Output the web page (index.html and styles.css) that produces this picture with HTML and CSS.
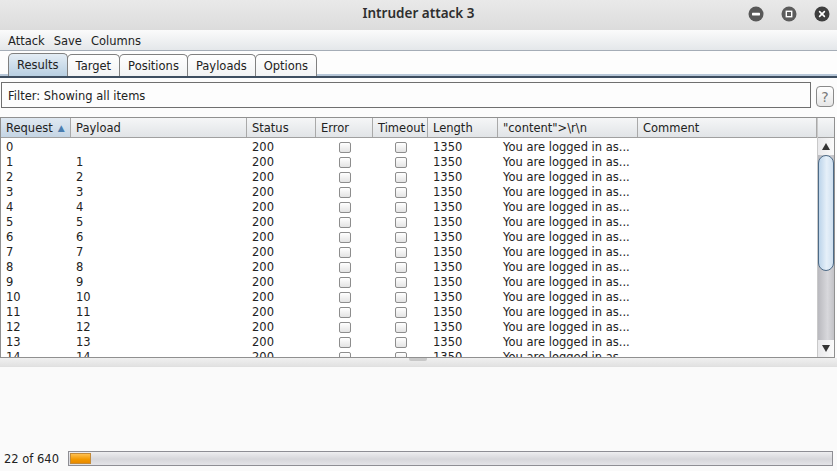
FILE: index.html
```html
<!DOCTYPE html>
<html>
<head>
<meta charset="utf-8">
<link rel="stylesheet" href="styles.css">
</head>
<body>
<div class="window">
  <div class="titlebar">
    <div class="title">Intruder attack 3</div>
    <div class="winbtns">
      <svg class="wb" viewBox="0 0 16 16"><circle cx="8" cy="8" r="7.5" fill="#585858"/><rect x="4" y="6.8" width="8" height="2.6" rx="0.6" fill="#fff"/></svg>
      <svg class="wb" viewBox="0 0 16 16"><circle cx="8" cy="8" r="7.5" fill="#5c5c5c"/><rect x="4.6" y="4.6" width="6.8" height="6.8" fill="#fff"/><rect x="6" y="6" width="4" height="4" fill="#5c5c5c"/></svg>
      <svg class="wb" viewBox="0 0 16 16"><circle cx="8" cy="8" r="7.5" fill="#3e3e3e"/><path d="M5.6 5.6 L10.4 10.4 M10.4 5.6 L5.6 10.4" stroke="#fff" stroke-width="1.6" stroke-linecap="round"/></svg>
    </div>
  </div>
  <div class="menubar">
    <span class="menu">Attack</span><span class="menu">Save</span><span class="menu">Columns</span>
  </div>
  <div class="tabs">
    <div class="tab active">Results</div>
    <div class="tab">Target</div>
    <div class="tab">Positions</div>
    <div class="tab">Payloads</div>
    <div class="tab">Options</div>
  </div>
  <div class="panel">
    <div class="filterrow">
      <div class="filter">Filter: Showing all items</div>
      <div class="help">?</div>
    </div>
    <div class="tablewrap">
      <div class="tablemain">
        <div class="hdr">
          <div class="hc c1 sorted">Request <span class="arrow">▲</span></div>
          <div class="hc c2">Payload</div>
          <div class="hc c3">Status</div>
          <div class="hc c4">Error</div>
          <div class="hc c5">Timeout</div>
          <div class="hc c6">Length</div>
          <div class="hc c7">"content"&gt;\r\n</div>
          <div class="hc c8">Comment</div>
        </div>
        <div class="rows">
          <div class="row"><div class="c c1">0</div><div class="c c2"></div><div class="c c3">200</div><div class="c c4 center"><span class="cb"></span></div><div class="c c5 center"><span class="cb"></span></div><div class="c c6">1350</div><div class="c c7">You are logged in as...</div><div class="c c8"></div></div>
          <div class="row"><div class="c c1">1</div><div class="c c2">1</div><div class="c c3">200</div><div class="c c4 center"><span class="cb"></span></div><div class="c c5 center"><span class="cb"></span></div><div class="c c6">1350</div><div class="c c7">You are logged in as...</div><div class="c c8"></div></div>
          <div class="row"><div class="c c1">2</div><div class="c c2">2</div><div class="c c3">200</div><div class="c c4 center"><span class="cb"></span></div><div class="c c5 center"><span class="cb"></span></div><div class="c c6">1350</div><div class="c c7">You are logged in as...</div><div class="c c8"></div></div>
          <div class="row"><div class="c c1">3</div><div class="c c2">3</div><div class="c c3">200</div><div class="c c4 center"><span class="cb"></span></div><div class="c c5 center"><span class="cb"></span></div><div class="c c6">1350</div><div class="c c7">You are logged in as...</div><div class="c c8"></div></div>
          <div class="row"><div class="c c1">4</div><div class="c c2">4</div><div class="c c3">200</div><div class="c c4 center"><span class="cb"></span></div><div class="c c5 center"><span class="cb"></span></div><div class="c c6">1350</div><div class="c c7">You are logged in as...</div><div class="c c8"></div></div>
          <div class="row"><div class="c c1">5</div><div class="c c2">5</div><div class="c c3">200</div><div class="c c4 center"><span class="cb"></span></div><div class="c c5 center"><span class="cb"></span></div><div class="c c6">1350</div><div class="c c7">You are logged in as...</div><div class="c c8"></div></div>
          <div class="row"><div class="c c1">6</div><div class="c c2">6</div><div class="c c3">200</div><div class="c c4 center"><span class="cb"></span></div><div class="c c5 center"><span class="cb"></span></div><div class="c c6">1350</div><div class="c c7">You are logged in as...</div><div class="c c8"></div></div>
          <div class="row"><div class="c c1">7</div><div class="c c2">7</div><div class="c c3">200</div><div class="c c4 center"><span class="cb"></span></div><div class="c c5 center"><span class="cb"></span></div><div class="c c6">1350</div><div class="c c7">You are logged in as...</div><div class="c c8"></div></div>
          <div class="row"><div class="c c1">8</div><div class="c c2">8</div><div class="c c3">200</div><div class="c c4 center"><span class="cb"></span></div><div class="c c5 center"><span class="cb"></span></div><div class="c c6">1350</div><div class="c c7">You are logged in as...</div><div class="c c8"></div></div>
          <div class="row"><div class="c c1">9</div><div class="c c2">9</div><div class="c c3">200</div><div class="c c4 center"><span class="cb"></span></div><div class="c c5 center"><span class="cb"></span></div><div class="c c6">1350</div><div class="c c7">You are logged in as...</div><div class="c c8"></div></div>
          <div class="row"><div class="c c1">10</div><div class="c c2">10</div><div class="c c3">200</div><div class="c c4 center"><span class="cb"></span></div><div class="c c5 center"><span class="cb"></span></div><div class="c c6">1350</div><div class="c c7">You are logged in as...</div><div class="c c8"></div></div>
          <div class="row"><div class="c c1">11</div><div class="c c2">11</div><div class="c c3">200</div><div class="c c4 center"><span class="cb"></span></div><div class="c c5 center"><span class="cb"></span></div><div class="c c6">1350</div><div class="c c7">You are logged in as...</div><div class="c c8"></div></div>
          <div class="row"><div class="c c1">12</div><div class="c c2">12</div><div class="c c3">200</div><div class="c c4 center"><span class="cb"></span></div><div class="c c5 center"><span class="cb"></span></div><div class="c c6">1350</div><div class="c c7">You are logged in as...</div><div class="c c8"></div></div>
          <div class="row"><div class="c c1">13</div><div class="c c2">13</div><div class="c c3">200</div><div class="c c4 center"><span class="cb"></span></div><div class="c c5 center"><span class="cb"></span></div><div class="c c6">1350</div><div class="c c7">You are logged in as...</div><div class="c c8"></div></div>
          <div class="row"><div class="c c1">14</div><div class="c c2">14</div><div class="c c3">200</div><div class="c c4 center"><span class="cb"></span></div><div class="c c5 center"><span class="cb"></span></div><div class="c c6">1350</div><div class="c c7">You are logged in as...</div><div class="c c8"></div></div>
        </div>
      </div>
      <div class="vscroll">
        <div class="corner"></div>
        <div class="sbtn"><span class="tri up"></span></div>
        <div class="track">
          <div class="thumb"></div>
          <div class="rest"></div>
        </div>
        <div class="sbtn"><span class="tri down"></span></div>
      </div>
    </div>
    <div class="splitter"><div class="grip"></div></div>
    <div class="lower"></div>
    <div class="status">
      <span class="count">22 of 640</span>
      <div class="progress"><div class="fill"></div></div>
    </div>
  </div>
</div>
</body>
</html>
```
FILE: styles.css
```css
* { box-sizing: border-box; }
html, body { margin: 0; padding: 0; }
body {
  width: 837px; height: 471px; overflow: hidden;
  font-family: "DejaVu Sans", sans-serif;
  font-size: 11.5px;
  color: #222222;
  background: #fbfbfb;
}
.window { display: flex; flex-direction: column; height: 471px; }

.titlebar {
  height: 30px; flex: none;
  display: flex; align-items: center; justify-content: center;
  position: relative;
  background: linear-gradient(#e9e9e9, #dcdcdc);
}
.title {
  font-family: "Noto Sans", "Open Sans", sans-serif;
  font-weight: 600; font-size: 13.5px; color: #2e2e2e;
  margin-top: -4px;
}
.winbtns {
  position: absolute; right: 7px; top: 6px;
  display: flex; gap: 17px;
}
.wb { width: 16px; height: 16px; display: block; }

.menubar {
  height: 21px; flex: none;
  display: flex; align-items: center; padding-left: 8px; padding-top: 1px; gap: 9px;
  background: linear-gradient(#fbfbfb, #e4e7ea);
  border-bottom: 1px solid #a5adb7;
}

.tabs {
  height: 27px; flex: none;
  display: flex; align-items: flex-end; padding-left: 8px;
  background: #fdfdfd;
  border-bottom: 2px solid #3e4e60;
  box-shadow: inset 0 -2px 0 #b7c7d8;
}
.tab {
  height: 22px; padding: 0 8px;
  display: flex; align-items: center;
  border: 1px solid #808080; border-bottom: none;
  border-radius: 5px 5px 0 0;
  margin-right: -1px;
  background: linear-gradient(#ffffff, #f2f3f4);
}
.tab.active {
  background: linear-gradient(#e4edf5, #b8cfe2);
  height: 23px;
}

.panel { flex: 1; display: flex; flex-direction: column; background: #fcfcfc; }
.filterrow { display: flex; align-items: flex-start; padding: 4px 0 0 1px; gap: 5px; height: 32px; flex: none; }
.filter {
  width: 810px; height: 26px;
  border: 1px solid #6f6f6f; background: #fdfdfd;
  display: flex; align-items: center; padding-left: 6px; padding-top: 1px;
}
.help {
  margin-top: 4px;
  width: 18px; height: 21px; border: 1px solid #8a8a8a; border-radius: 4px;
  display: flex; align-items: center; justify-content: center;
  font-size: 14px; color: #7a7a7a;
  background: linear-gradient(#ffffff, #e6e6e6);
}

.tablewrap {
  margin-top: 7px;
  height: 241px; width: 835px; flex: none;
  border: 1px solid #909090;
  display: flex; background: #ffffff;
}
.tablemain { width: 816px; overflow: hidden; display: flex; flex-direction: column; }
.hdr { display: flex; height: 20px; flex: none; border-bottom: 1px solid #a0a0a0; }
.hc {
  height: 19px; display: flex; align-items: center; padding-left: 5px; padding-top: 1px;
  border-right: 1px solid #a9a9a9;
  background: linear-gradient(#f5f6f7, #e1e4e7);
  white-space: nowrap;
}
.hc.sorted { background: linear-gradient(#dfe8f1, #c5d5e4); }
.arrow { color: #4a7db0; font-size: 9px; margin-left: 5px; }
.c1 { width: 70px; flex: none; }
.c2 { width: 176px; flex: none; }
.c3 { width: 69px; flex: none; }
.c4 { width: 57px; flex: none; }
.c5 { width: 55px; flex: none; }
.c6 { width: 70px; flex: none; }
.c7 { width: 140px; flex: none; }
.c8 { width: 179px; flex: none; }
.rows { overflow: hidden; flex: 1; padding-top: 2px; }
.row { display: flex; height: 15px; }
.c { height: 15px; line-height: 15px; padding-left: 5px; white-space: nowrap; overflow: hidden; }
.c.center { display: flex; justify-content: center; align-items: center; padding-left: 0; }
.cb {
  width: 12px; height: 11px; display: block;
  border: 1px solid #8d8d8d; border-radius: 2px;
  background: linear-gradient(#ffffff, #e3e3e3);
  margin-left: 1px;
}

.vscroll { width: 17px; display: flex; flex-direction: column; border-left: 1px solid #c9c9c9; }
.corner { height: 20px; flex: none; background: linear-gradient(#f5f6f7, #e1e4e7); border-bottom: 1px solid #a0a0a0; }
.sbtn {
  height: 17px; flex: none; display: flex; align-items: center; justify-content: center;
  background: linear-gradient(90deg, #e9e9eb, #fafafa);
}
.tri { width: 0; height: 0; border-left: 4px solid transparent; border-right: 4px solid transparent; }
.tri.up { border-bottom: 7px solid #333; }
.tri.down { border-top: 7px solid #333; }
.track { flex: 1; display: flex; flex-direction: column; background: linear-gradient(90deg, #b9b9be, #d8d8dc 60%, #c2c2c6); }
.thumb {
  height: 116px; flex: none;
  border: 1px solid #4d6a86; border-radius: 8px;
  background: linear-gradient(90deg, #bcd4ea, #e6f0f9 55%, #cfe0f0);
}
.rest { flex: 1; }

.splitter {
  height: 9px; flex: none; position: relative;
  background: linear-gradient(#f0f0f0, #e2e2e2);
  border-bottom: 1px solid #e0e0e0;
}
.grip { position: absolute; left: 409px; top: 0; width: 18px; height: 3px; background: #c8c8c8; border-radius: 0 0 2px 2px; }
.lower { flex: 1; background: #fafafa; }
.status {
  height: 25px; flex: none; display: flex; align-items: center; padding: 0 4px 0 4px; gap: 9px;
  background: #fafafa;
}
.count { width: 55px; }
.progress {
  flex: 1; height: 15px; border: 1px solid #8e8e94;
  background: linear-gradient(#eeeef0, #d6d6da 55%, #e4e4e8);
  padding: 1px;
}
.fill {
  width: 21px; height: 100%;
  border: 1px solid #c28a3a;
  background: linear-gradient(#ffc050, #f29800 60%, #e88a00);
}
```
